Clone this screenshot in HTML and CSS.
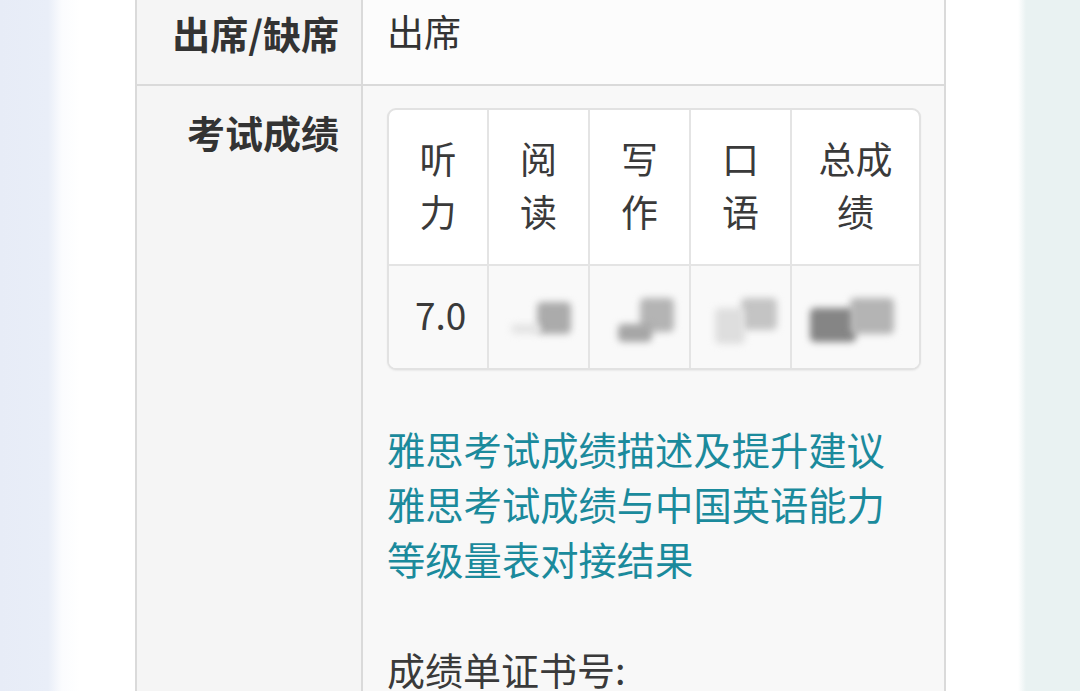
FILE: index.html
```html
<!DOCTYPE html>
<html lang="zh-CN">
<head>
  <meta charset="UTF-8" />
  <meta name="viewport" content="width=device-width, initial-scale=1.0"/>
  <title>雅思成绩</title>
  <link rel="stylesheet" href="styles.css">
</head>
<body>
  <div class="page">
    <table class="result">
      <tr>
        <th>出席/缺席</th>
        <td class="plain">出席</td>
      </tr>
      <tr>
        <th class="top">考试成绩</th>
        <td class="top">
          <table class="scores">
            <colgroup>
              <col class="c1"><col class="c2"><col class="c3"><col class="c4"><col class="c5">
            </colgroup>
            <tr>
              <td>听力</td>
              <td>阅读</td>
              <td>写作</td>
              <td>口语</td>
              <td>总成绩</td>
            </tr>
            <tr class="vals">
              <td>7.0</td>
              <td><span class="smudge s-read"><i class="b1"></i><i class="b2"></i></span></td>
              <td><span class="smudge s-write"><i class="b1"></i><i class="b2"></i></span></td>
              <td><span class="smudge s-speak"><i class="b1"></i><i class="b2"></i></span></td>
              <td><span class="smudge s-total"><i class="b1"></i><i class="b2"></i></span></td>
            </tr>
          </table>
          <div class="links">
            <a href="#">雅思考试成绩描述及提升建议</a><br>
            <a href="#">雅思考试成绩与中国英语能力等级量表对接结果</a>
          </div>
          <p class="cert">成绩单证书号:</p>
        </td>
      </tr>
    </table>
  </div>
</body>
</html>
```

FILE: styles.css
```css
:root {
  --text: #333333;
  --link: #1b8a9c;
  --line: #dadada;
  --label-bg: #f5f5f5;
  --cell-bg: #f8f8f8;
}

* {
  box-sizing: border-box;
}

html, body {
  margin: 0;
  height: 100%;
  overflow: hidden;
}

body {
  font-family: "Noto Sans CJK SC", "Noto Sans", sans-serif;
  color: var(--text);
  background: linear-gradient(to right,
    #e7ecf7 0, #e9eef8 48px, #fbfcfe 62px, #ffffff 80px,
    #ffffff 1018px, #e9f2f2 1026px, #e9f2f2 100%);
}

.page {
  padding-left: 135px;
  margin-top: -21px;
}

.result {
  border-collapse: collapse;
  table-layout: fixed;
  width: 811px;
  font-size: 37px;
  line-height: 53px;
}

.result > tbody > tr > th,
.result > tbody > tr > td {
  border: 2px solid var(--line);
  padding: 24px;
}

.result > tbody > tr > th {
  width: 226px;
  padding-right: 22px;
  background: var(--label-bg);
  text-align: right;
  font-weight: 700;
  font-size: 38px;
  white-space: nowrap;
}

.result > tbody > tr > td {
  background: var(--cell-bg);
  font-weight: 400;
}

.result > tbody > tr > td.plain {
  background: #fcfcfc;
  padding-bottom: 26px;
}

.result .top {
  vertical-align: top;
  padding-bottom: 0;
}

.result > tbody > tr > th.top {
  padding-top: 19px;
}

.result > tbody > tr > td.top {
  padding-top: 22px;
}

.scores {
  border-collapse: separate;
  border-spacing: 0;
  table-layout: fixed;
  border: 2px solid #e2e2e2;
  border-radius: 9px;
  width: 534px;
  background: #ffffff;
  box-shadow: 0 1px 2px rgba(0, 0, 0, 0.06);
  overflow: hidden;
}

.scores .c1 { width: 100px; }
.scores .c2 { width: 101px; }
.scores .c3 { width: 101px; }
.scores .c4 { width: 101px; }
.scores .c5 { width: 127px; }

.scores td {
  padding: 22px 26px 26px;
  text-align: center;
  vertical-align: middle;
  border-right: 2px solid #e4e4e4;
  border-bottom: 2px solid #e4e4e4;
  color: #3a3a3a;
}

.scores tr td:last-child {
  border-right: none;
}

.scores tr.vals td {
  border-bottom: none;
  background: #f9f9f9;
  height: 100px;
  padding-top: 22px;
  padding-bottom: 26px;
}

.smudge {
  display: inline-block;
  position: relative;
  width: 60px;
  height: 44px;
  vertical-align: middle;
}

.smudge i {
  position: absolute;
  display: block;
  border-radius: 5px;
  filter: blur(3.5px);
}

.s-read .b1 { left: 22px; top: 4px; width: 34px; height: 32px; background: #ababab; }
.s-read .b2 { left: -4px; top: 26px; width: 30px; height: 10px; background: #e4e4e4; }

.s-write .b1 { left: 24px; top: 0; width: 34px; height: 34px; background: #b4b4b4; }
.s-write .b2 { left: 2px; top: 26px; width: 34px; height: 18px; background: #a6a6a6; }

.s-speak .b1 { left: 24px; top: 0; width: 36px; height: 32px; background: #c4c4c4; }
.s-speak .b2 { left: -2px; top: 10px; width: 30px; height: 36px; background: #dedede; }

.s-total { width: 86px; margin-left: -8px; }
.s-total .b1 { left: 0; top: 10px; width: 46px; height: 34px; background: #858585; }
.s-total .b2 { left: 40px; top: 0; width: 44px; height: 36px; background: #b4b4b4; }

.links {
  margin-top: 51px;
  width: 520px;
  font-size: 38.3px;
  line-height: 55px;
}

.links a {
  color: var(--link);
  text-decoration: none;
}

.cert {
  margin: 55px 0 0;
  font-size: 38px;
  line-height: 55px;
  color: #3a3a3a;
}
```
